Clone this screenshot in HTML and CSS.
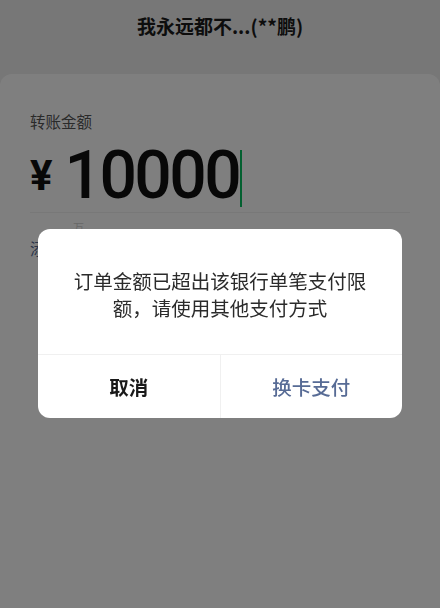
FILE: index.html
```html
<!DOCTYPE html>
<html lang="zh-CN">
<head>
<meta charset="utf-8">
<title>转账</title>
<link rel="stylesheet" href="styles.css">
</head>
<body>
<div class="page">
  <header class="header">
    <div class="title">我永远都不...(**鹏)</div>
  </header>
  <main class="card">
    <div class="label">转账金额</div>
    <div class="amount-row">
      <span class="yen">¥</span>
      <span class="digits">10000</span>
      <span class="cursor"></span>
    </div>
    <div class="unit-row"><span class="unit">万</span></div>
    <div class="note-link">添加转账说明</div>
  </main>
</div>
<div class="mask"></div>
<div class="dialog">
  <div class="dialog-body">订单金额已超出该银行单笔支付限额，请使用其他支付方式</div>
  <div class="dialog-footer">
    <div class="btn btn-cancel">取消</div>
    <div class="btn btn-primary">换卡支付</div>
  </div>
</div>
</body>
</html>
```
FILE: styles.css
```css
html, body {
  margin: 0;
  padding: 0;
  height: 100%;
}
body {
  background: #eeeeee;
  font-family: "Noto Sans CJK SC", "Noto Sans", sans-serif;
  overflow: hidden;
}
.page {
  display: flex;
  flex-direction: column;
  height: 608px;
}
.header {
  height: 74px;
  display: flex;
  justify-content: center;
  align-items: flex-start;
  padding-top: 12px;
  box-sizing: border-box;
}
.title {
  font-size: 19px;
  line-height: 28px;
  font-weight: 700;
  color: #1a1a1a;
}
.card {
  flex: 1;
  background: #ffffff;
  border-radius: 12px 12px 0 0;
  padding: 37px 30px 0;
}
.label {
  font-size: 15.5px;
  line-height: 20px;
  color: #555555;
}
.amount-row {
  display: flex;
  align-items: center;
  height: 66px;
  margin-top: 12px;
  padding-bottom: 3px;
  border-bottom: 1px solid #f0f0f0;
}
.yen {
  font-family: Roboto, "Noto Sans", sans-serif;
  font-size: 42px;
  line-height: 42px;
  font-weight: 700;
  color: #111111;
  margin-right: 12px;
}
.digits {
  font-family: Roboto, "Noto Sans", sans-serif;
  font-size: 66px;
  line-height: 66px;
  font-weight: 500;
  letter-spacing: -2.6px;
  color: #111111;
}
.cursor {
  align-self: flex-end;
  width: 2px;
  height: 57px;
  margin-left: 1px;
  margin-bottom: 2px;
  background: #07c160;
}
.unit-row {
  padding-left: 43px;
  height: 16px;
}
.unit {
  font-size: 11px;
  line-height: 16px;
  color: #d0d0d0;
}
.note-link {
  margin-top: 9px;
  font-size: 15.5px;
  line-height: 20px;
  color: #576b95;
}
.mask {
  position: fixed;
  inset: 0;
  background: rgba(0, 0, 0, 0.5);
}
.dialog {
  position: fixed;
  top: 229px;
  left: 38px;
  width: 364px;
  background: #ffffff;
  border-radius: 12px;
  overflow: hidden;
}
.dialog-body {
  padding: 38px 32px 33px;
  text-align: center;
  font-size: 19.5px;
  line-height: 27px;
  color: #2b2b2b;
}
.dialog-footer {
  display: flex;
  height: 63px;
  border-top: 1px solid #f0f0f0;
}
.btn {
  flex: 1;
  display: flex;
  align-items: center;
  justify-content: center;
  font-size: 19.5px;
}
.btn-cancel {
  color: #191919;
  font-weight: 700;
}
.btn-primary {
  color: #576b95;
  font-weight: 500;
  border-left: 1px solid #f0f0f0;
}
```
